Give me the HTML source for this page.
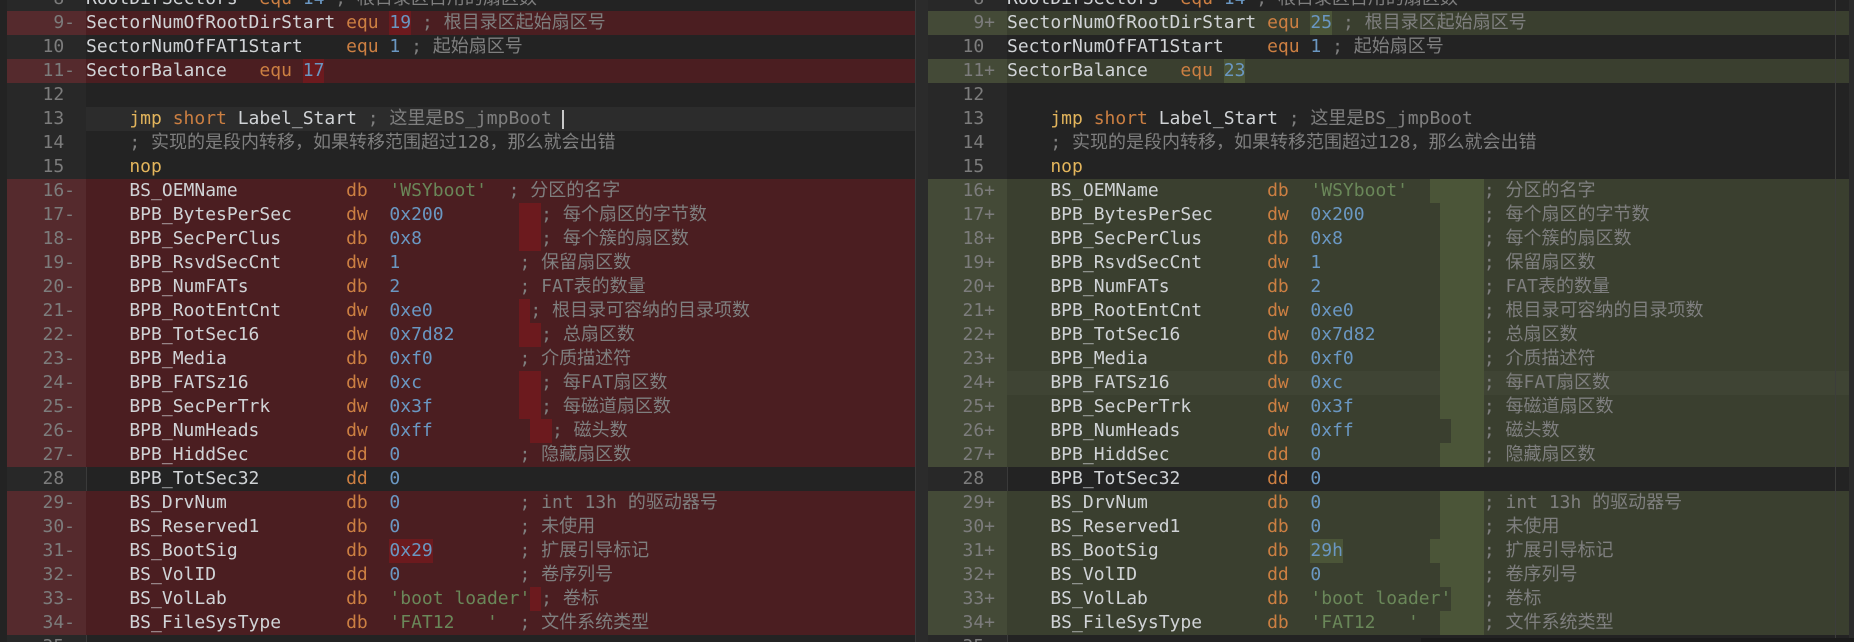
<!DOCTYPE html>
<html><head><meta charset="utf-8"><style>
*{margin:0;padding:0;box-sizing:border-box}
body{width:1854px;height:642px;background:#2b2b2b;overflow:hidden;position:relative;font-family:"DejaVu Sans Mono","Liberation Mono","Noto Sans CJK SC",monospace;font-size:18px;line-height:24px;color:#d0d3d6}
.pane{position:absolute;top:0;height:642px;background:#232323;overflow:hidden}
#L{left:0;width:915px}
#R{left:928px;width:921px}
.gb{position:absolute;top:0;bottom:0;background:#282828}
.row{position:absolute;right:0;height:24px}
#L .row{left:7px}
#R .row{left:0}
.d{background:#4b1e21}
.a{background:#3a3f2f}
.cur{background:#2c2c2c}
.acur{background:#3f4434}
.g{position:absolute;top:0;height:24px;color:#7c7c7c;text-align:right;white-space:pre}
#L .g{left:0;width:79px;padding-right:11px}
#R .g{left:0;width:79px;padding-right:12px}
.d .g{background:#552a2d}
.a .g{background:#444a37}
.c{position:absolute;top:0;height:24px;white-space:pre}
#L .c{left:79px}
#R .c{left:79px}
.c i{position:absolute;top:0;font-style:normal;white-space:pre}
.k{color:#cc7f42}
.y{color:#e3b55c}
.n{color:#6a97c2}
.s{color:#6a8759}
.m{color:#7f7f7f}
.hr{background:#6c1a1e;height:24px}
.hg{background:#4b5538;height:24px}
.guide{position:absolute;top:203px;bottom:0;width:1px;background:#3a3a3a}
</style></head><body>

<div class="pane" id="L">
<div class="gb" style="left:7px;width:79px"></div>
<div class="guide" style="left:86px"></div>

<div class="row" style="top:-13px"><span class="g">8 </span><div class="c"><i style="left:0">RootDirSectors</i><i class="k" style="left:16ch">equ</i><i class="n" style="left:20ch">14</i><i class="m" style="left:23ch">; 根目录区占用的扇区数</i></div></div>
<div class="row d" style="top:11px"><span class="g">9-</span><div class="c"><i style="left:0">SectorNumOfRootDirStart</i><i class="k" style="left:24ch">equ</i><i class="n hr" style="left:28ch">19</i><i class="m" style="left:31ch">; 根目录区起始扇区号</i></div></div>
<div class="row" style="top:35px"><span class="g">10 </span><div class="c"><i style="left:0">SectorNumOfFAT1Start</i><i class="k" style="left:24ch">equ</i><i class="n" style="left:28ch">1</i><i class="m" style="left:30ch">; 起始扇区号</i></div></div>
<div class="row d" style="top:59px"><span class="g">11-</span><div class="c"><i style="left:0">SectorBalance</i><i class="k" style="left:16ch">equ</i><i class="n hr" style="left:20ch">17</i></div></div>
<div class="row" style="top:83px"><span class="g">12 </span></div>
<div class="row cur" style="top:107px;left:86px"></div>
<div class="row" style="top:107px;background:transparent"><span class="g">13 </span><div class="c"><i class="y" style="left:4ch">jmp</i><i class="k" style="left:8ch">short</i><i style="left:14ch">Label_Start</i><i class="m" style="left:26ch">; 这里是BS_jmpBoot</i><i style="left:476px;top:3px;width:2px;height:19px;background:#c8c8c8"></i></div></div>
<div class="row" style="top:131px"><span class="g">14 </span><div class="c"><i class="m" style="left:4ch">; 实现的是段内转移，如果转移范围超过128，那么就会出错</i></div></div>
<div class="row" style="top:155px"><span class="g">15 </span><div class="c"><i class="y" style="left:4ch">nop</i></div></div>

<div class="row d" style="top:179px"><span class="g">16-</span><div class="c"><i style="left:4ch">BS_OEMName</i><i class="k" style="left:24ch">db</i><i class="s" style="left:28ch">'WSYboot'</i><i class="m" style="left:39ch">; 分区的名字</i></div></div>
<div class="row d" style="top:203px"><span class="g">17-</span><div class="c"><i style="left:4ch">BPB_BytesPerSec</i><i class="k" style="left:24ch">dw</i><i class="n" style="left:28ch">0x200</i><i class="hr" style="left:40ch;width:2ch"></i><i class="m" style="left:42ch">; 每个扇区的字节数</i></div></div>
<div class="row d" style="top:227px"><span class="g">18-</span><div class="c"><i style="left:4ch">BPB_SecPerClus</i><i class="k" style="left:24ch">db</i><i class="n" style="left:28ch">0x8</i><i class="hr" style="left:40ch;width:2ch"></i><i class="m" style="left:42ch">; 每个簇的扇区数</i></div></div>
<div class="row d" style="top:251px"><span class="g">19-</span><div class="c"><i style="left:4ch">BPB_RsvdSecCnt</i><i class="k" style="left:24ch">dw</i><i class="n" style="left:28ch">1</i><i class="m" style="left:40ch">; 保留扇区数</i></div></div>
<div class="row d" style="top:275px"><span class="g">20-</span><div class="c"><i style="left:4ch">BPB_NumFATs</i><i class="k" style="left:24ch">db</i><i class="n" style="left:28ch">2</i><i class="m" style="left:40ch">; FAT表的数量</i></div></div>
<div class="row d" style="top:299px"><span class="g">21-</span><div class="c"><i style="left:4ch">BPB_RootEntCnt</i><i class="k" style="left:24ch">dw</i><i class="n" style="left:28ch">0xe0</i><i class="hr" style="left:40ch;width:1ch"></i><i class="m" style="left:41ch">; 根目录可容纳的目录项数</i></div></div>
<div class="row d" style="top:323px"><span class="g">22-</span><div class="c"><i style="left:4ch">BPB_TotSec16</i><i class="k" style="left:24ch">dw</i><i class="n" style="left:28ch">0x7d82</i><i class="hr" style="left:40ch;width:2ch"></i><i class="m" style="left:42ch">; 总扇区数</i></div></div>
<div class="row d" style="top:347px"><span class="g">23-</span><div class="c"><i style="left:4ch">BPB_Media</i><i class="k" style="left:24ch">db</i><i class="n" style="left:28ch">0xf0</i><i class="m" style="left:40ch">; 介质描述符</i></div></div>
<div class="row d" style="top:371px"><span class="g">24-</span><div class="c"><i style="left:4ch">BPB_FATSz16</i><i class="k" style="left:24ch">dw</i><i class="n" style="left:28ch">0xc</i><i class="hr" style="left:40ch;width:2ch"></i><i class="m" style="left:42ch">; 每FAT扇区数</i></div></div>
<div class="row d" style="top:395px"><span class="g">25-</span><div class="c"><i style="left:4ch">BPB_SecPerTrk</i><i class="k" style="left:24ch">dw</i><i class="n" style="left:28ch">0x3f</i><i class="hr" style="left:40ch;width:2ch"></i><i class="m" style="left:42ch">; 每磁道扇区数</i></div></div>
<div class="row d" style="top:419px"><span class="g">26-</span><div class="c"><i style="left:4ch">BPB_NumHeads</i><i class="k" style="left:24ch">dw</i><i class="n" style="left:28ch">0xff</i><i class="hr" style="left:41ch;width:2ch"></i><i class="m" style="left:43ch">; 磁头数</i></div></div>
<div class="row d" style="top:443px"><span class="g">27-</span><div class="c"><i style="left:4ch">BPB_HiddSec</i><i class="k" style="left:24ch">dd</i><i class="n" style="left:28ch">0</i><i class="m" style="left:40ch">; 隐藏扇区数</i></div></div>
<div class="row" style="top:467px"><span class="g">28 </span><div class="c"><i style="left:4ch">BPB_TotSec32</i><i class="k" style="left:24ch">dd</i><i class="n" style="left:28ch">0</i></div></div>
<div class="row d" style="top:491px"><span class="g">29-</span><div class="c"><i style="left:4ch">BS_DrvNum</i><i class="k" style="left:24ch">db</i><i class="n" style="left:28ch">0</i><i class="m" style="left:40ch">; int 13h 的驱动器号</i></div></div>
<div class="row d" style="top:515px"><span class="g">30-</span><div class="c"><i style="left:4ch">BS_Reserved1</i><i class="k" style="left:24ch">db</i><i class="n" style="left:28ch">0</i><i class="m" style="left:40ch">; 未使用</i></div></div>
<div class="row d" style="top:539px"><span class="g">31-</span><div class="c"><i style="left:4ch">BS_BootSig</i><i class="k" style="left:24ch">db</i><i class="n hr" style="left:28ch">0x29</i><i class="m" style="left:40ch">; 扩展引导标记</i></div></div>
<div class="row d" style="top:563px"><span class="g">32-</span><div class="c"><i style="left:4ch">BS_VolID</i><i class="k" style="left:24ch">dd</i><i class="n" style="left:28ch">0</i><i class="m" style="left:40ch">; 卷序列号</i></div></div>
<div class="row d" style="top:587px"><span class="g">33-</span><div class="c"><i style="left:4ch">BS_VolLab</i><i class="k" style="left:24ch">db</i><i class="s" style="left:28ch">'boot loader'</i><i class="hr" style="left:41ch;width:1ch"></i><i class="m" style="left:42ch">; 卷标</i></div></div>
<div class="row d" style="top:611px"><span class="g">34-</span><div class="c"><i style="left:4ch">BS_FileSysType</i><i class="k" style="left:24ch">db</i><i class="s" style="left:28ch">'FAT12   '</i><i class="m" style="left:40ch">; 文件系统类型</i></div></div>
<div class="row" style="top:635px"><span class="g">35 </span></div>
</div>

<div style="position:absolute;left:915px;top:0;width:13px;height:642px;background:#2b2b2b;border-left:1px solid #3a3a3a"></div>

<div class="pane" id="R">
<div class="gb" style="left:0;width:79px"></div>
<div class="guide" style="left:79px"></div>

<div class="row" style="top:-13px"><span class="g">8 </span><div class="c"><i style="left:0">RootDirSectors</i><i class="k" style="left:16ch">equ</i><i class="n" style="left:20ch">14</i><i class="m" style="left:23ch">; 根目录区占用的扇区数</i></div></div>
<div class="row a" style="top:11px"><span class="g">9+</span><div class="c"><i style="left:0">SectorNumOfRootDirStart</i><i class="k" style="left:24ch">equ</i><i class="n hg" style="left:28ch">25</i><i class="m" style="left:31ch">; 根目录区起始扇区号</i></div></div>
<div class="row" style="top:35px"><span class="g">10 </span><div class="c"><i style="left:0">SectorNumOfFAT1Start</i><i class="k" style="left:24ch">equ</i><i class="n" style="left:28ch">1</i><i class="m" style="left:30ch">; 起始扇区号</i></div></div>
<div class="row a" style="top:59px"><span class="g">11+</span><div class="c"><i style="left:0">SectorBalance</i><i class="k" style="left:16ch">equ</i><i class="n hg" style="left:20ch">23</i></div></div>
<div class="row" style="top:83px"><span class="g">12 </span></div>
<div class="row" style="top:107px"><span class="g">13 </span><div class="c"><i class="y" style="left:4ch">jmp</i><i class="k" style="left:8ch">short</i><i style="left:14ch">Label_Start</i><i class="m" style="left:26ch">; 这里是BS_jmpBoot</i></div></div>
<div class="row" style="top:131px"><span class="g">14 </span><div class="c"><i class="m" style="left:4ch">; 实现的是段内转移，如果转移范围超过128，那么就会出错</i></div></div>
<div class="row" style="top:155px"><span class="g">15 </span><div class="c"><i class="y" style="left:4ch">nop</i></div></div>

<div class="row a" style="top:179px"><span class="g">16+</span><div class="c"><i style="left:4ch">BS_OEMName</i><i class="k" style="left:24ch">db</i><i class="s" style="left:28ch">'WSYboot'</i><i class="hg" style="left:39ch;width:5ch"></i><i class="m" style="left:44ch">; 分区的名字</i></div></div>
<div class="row a" style="top:203px"><span class="g">17+</span><div class="c"><i style="left:4ch">BPB_BytesPerSec</i><i class="k" style="left:24ch">dw</i><i class="n" style="left:28ch">0x200</i><i class="hg" style="left:40ch;width:4ch"></i><i class="m" style="left:44ch">; 每个扇区的字节数</i></div></div>
<div class="row a" style="top:227px"><span class="g">18+</span><div class="c"><i style="left:4ch">BPB_SecPerClus</i><i class="k" style="left:24ch">db</i><i class="n" style="left:28ch">0x8</i><i class="hg" style="left:40ch;width:4ch"></i><i class="m" style="left:44ch">; 每个簇的扇区数</i></div></div>
<div class="row a" style="top:251px"><span class="g">19+</span><div class="c"><i style="left:4ch">BPB_RsvdSecCnt</i><i class="k" style="left:24ch">dw</i><i class="n" style="left:28ch">1</i><i class="hg" style="left:40ch;width:4ch"></i><i class="m" style="left:44ch">; 保留扇区数</i></div></div>
<div class="row a" style="top:275px"><span class="g">20+</span><div class="c"><i style="left:4ch">BPB_NumFATs</i><i class="k" style="left:24ch">db</i><i class="n" style="left:28ch">2</i><i class="hg" style="left:40ch;width:4ch"></i><i class="m" style="left:44ch">; FAT表的数量</i></div></div>
<div class="row a" style="top:299px"><span class="g">21+</span><div class="c"><i style="left:4ch">BPB_RootEntCnt</i><i class="k" style="left:24ch">dw</i><i class="n" style="left:28ch">0xe0</i><i class="hg" style="left:40ch;width:4ch"></i><i class="m" style="left:44ch">; 根目录可容纳的目录项数</i></div></div>
<div class="row a" style="top:323px"><span class="g">22+</span><div class="c"><i style="left:4ch">BPB_TotSec16</i><i class="k" style="left:24ch">dw</i><i class="n" style="left:28ch">0x7d82</i><i class="hg" style="left:40ch;width:4ch"></i><i class="m" style="left:44ch">; 总扇区数</i></div></div>
<div class="row a" style="top:347px"><span class="g">23+</span><div class="c"><i style="left:4ch">BPB_Media</i><i class="k" style="left:24ch">db</i><i class="n" style="left:28ch">0xf0</i><i class="hg" style="left:40ch;width:4ch"></i><i class="m" style="left:44ch">; 介质描述符</i></div></div>
<div class="row a acur" style="top:371px"><span class="g">24+</span><div class="c"><i style="left:4ch">BPB_FATSz16</i><i class="k" style="left:24ch">dw</i><i class="n" style="left:28ch">0xc</i><i class="hg" style="left:40ch;width:4ch"></i><i class="m" style="left:44ch">; 每FAT扇区数</i></div></div>
<div class="row a" style="top:395px"><span class="g">25+</span><div class="c"><i style="left:4ch">BPB_SecPerTrk</i><i class="k" style="left:24ch">dw</i><i class="n" style="left:28ch">0x3f</i><i class="hg" style="left:40ch;width:4ch"></i><i class="m" style="left:44ch">; 每磁道扇区数</i></div></div>
<div class="row a" style="top:419px"><span class="g">26+</span><div class="c"><i style="left:4ch">BPB_NumHeads</i><i class="k" style="left:24ch">dw</i><i class="n" style="left:28ch">0xff</i><i class="hg" style="left:41ch;width:3ch"></i><i class="m" style="left:44ch">; 磁头数</i></div></div>
<div class="row a" style="top:443px"><span class="g">27+</span><div class="c"><i style="left:4ch">BPB_HiddSec</i><i class="k" style="left:24ch">dd</i><i class="n" style="left:28ch">0</i><i class="hg" style="left:40ch;width:4ch"></i><i class="m" style="left:44ch">; 隐藏扇区数</i></div></div>
<div class="row" style="top:467px"><span class="g">28 </span><div class="c"><i style="left:4ch">BPB_TotSec32</i><i class="k" style="left:24ch">dd</i><i class="n" style="left:28ch">0</i></div></div>
<div class="row a" style="top:491px"><span class="g">29+</span><div class="c"><i style="left:4ch">BS_DrvNum</i><i class="k" style="left:24ch">db</i><i class="n" style="left:28ch">0</i><i class="hg" style="left:40ch;width:4ch"></i><i class="m" style="left:44ch">; int 13h 的驱动器号</i></div></div>
<div class="row a" style="top:515px"><span class="g">30+</span><div class="c"><i style="left:4ch">BS_Reserved1</i><i class="k" style="left:24ch">db</i><i class="n" style="left:28ch">0</i><i class="hg" style="left:40ch;width:4ch"></i><i class="m" style="left:44ch">; 未使用</i></div></div>
<div class="row a" style="top:539px"><span class="g">31+</span><div class="c"><i style="left:4ch">BS_BootSig</i><i class="k" style="left:24ch">db</i><i class="n hg" style="left:28ch">29h</i><i class="hg" style="left:39ch;width:5ch"></i><i class="m" style="left:44ch">; 扩展引导标记</i></div></div>
<div class="row a" style="top:563px"><span class="g">32+</span><div class="c"><i style="left:4ch">BS_VolID</i><i class="k" style="left:24ch">dd</i><i class="n" style="left:28ch">0</i><i class="hg" style="left:40ch;width:4ch"></i><i class="m" style="left:44ch">; 卷序列号</i></div></div>
<div class="row a" style="top:587px"><span class="g">33+</span><div class="c"><i style="left:4ch">BS_VolLab</i><i class="k" style="left:24ch">db</i><i class="s" style="left:28ch">'boot loader'</i><i class="hg" style="left:41ch;width:3ch"></i><i class="m" style="left:44ch">; 卷标</i></div></div>
<div class="row a" style="top:611px"><span class="g">34+</span><div class="c"><i style="left:4ch">BS_FileSysType</i><i class="k" style="left:24ch">db</i><i class="s" style="left:28ch">'FAT12   '</i><i class="hg" style="left:40ch;width:4ch"></i><i class="m" style="left:44ch">; 文件系统类型</i></div></div>
<div class="row" style="top:635px"><span class="g">35 </span></div>
<div style="position:absolute;left:907px;top:0;width:1px;height:642px;background:#3c3c3c"></div>
</div>

<div style="position:absolute;left:1421px;top:638px;width:433px;height:4px;background:#1b1b1b"></div>
</body></html>
